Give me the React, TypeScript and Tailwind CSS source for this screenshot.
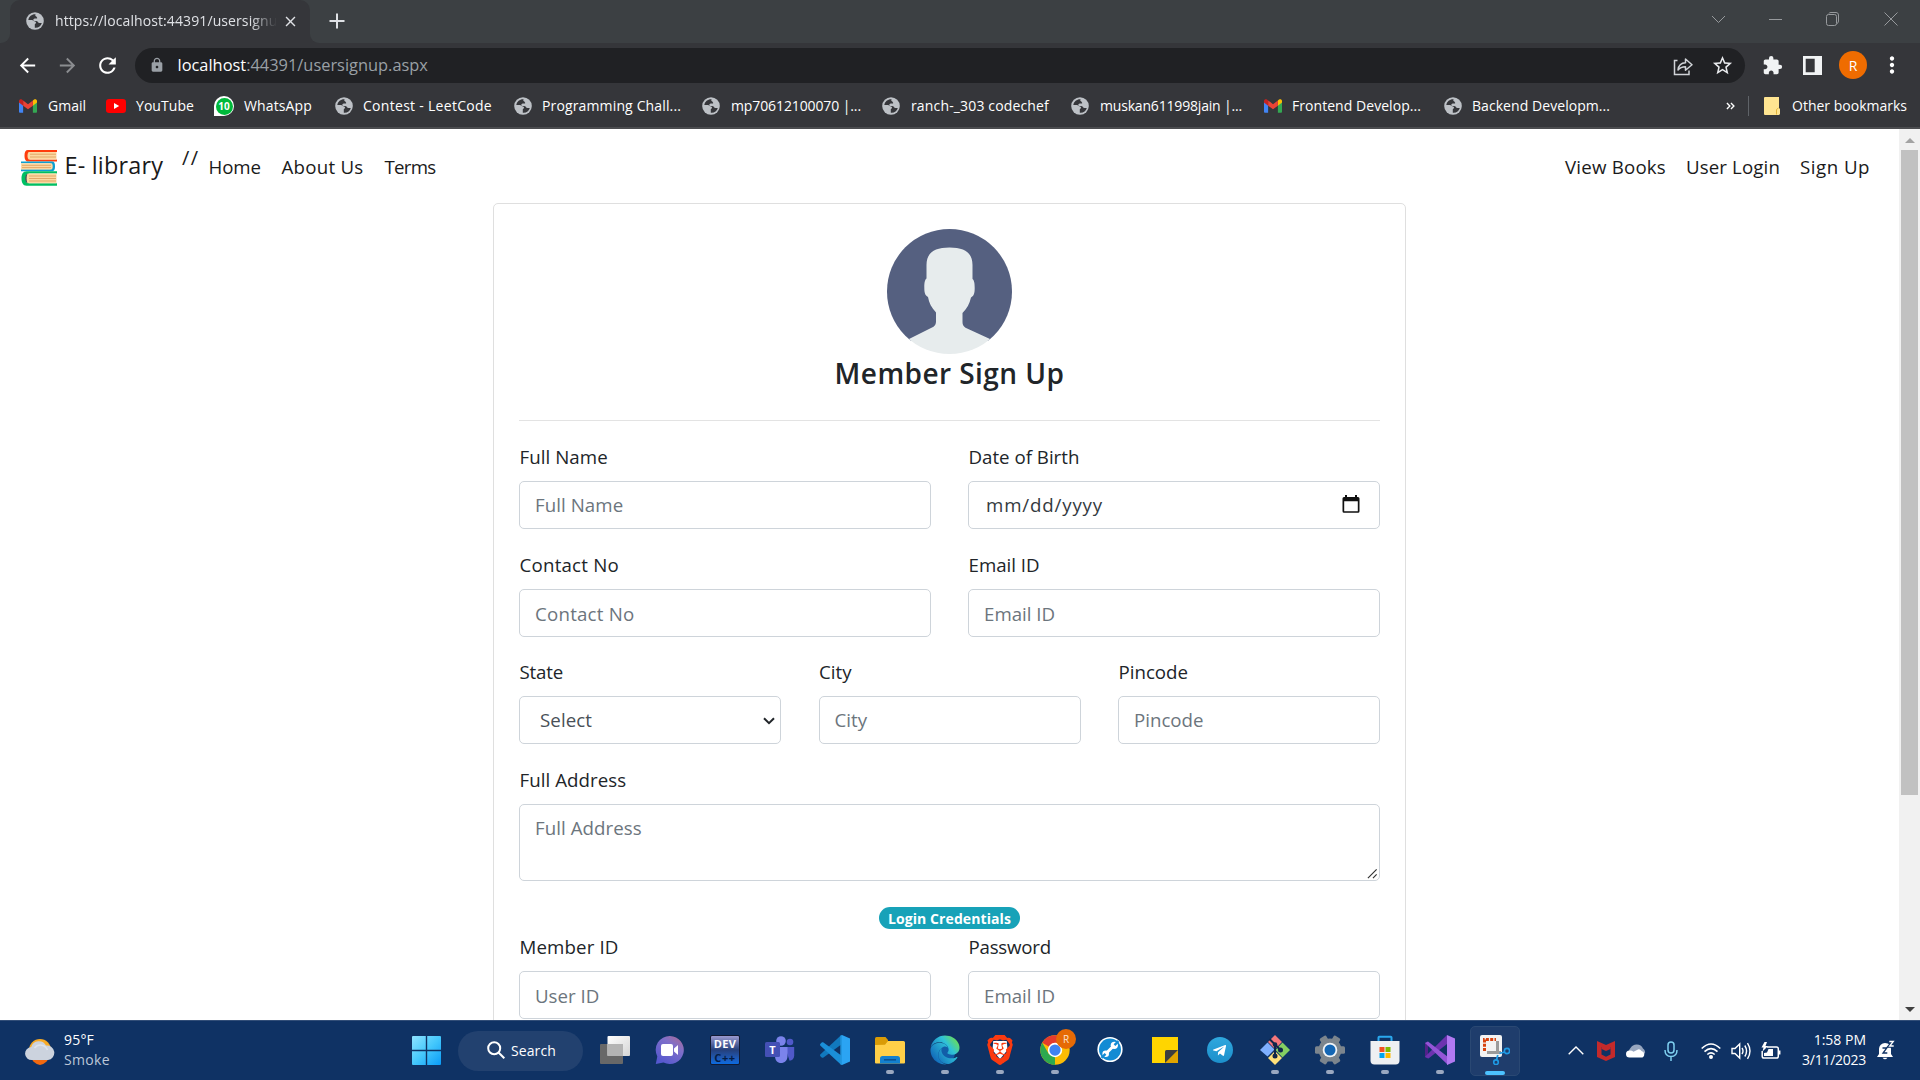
import React from "react";
import { MdExtension, MdLock, MdMoreVert, MdStarBorder, MdRefresh, MdArrowBack, MdArrowForward, MdClose } from "react-icons/md";
import { SiBrave } from "react-icons/si";
import { FaEdge, FaTelegramPlane } from "react-icons/fa";

/* ---------- small icons ---------- */

function Globe({ className = "" }: { className?: string }) {
  return (
    <svg viewBox="0 0 18 18" className={`h-[18px] w-[18px] shrink-0 ${className}`}>
      <circle cx="9" cy="9" r="8.8" fill="#bdc1c6" />
      <path
        d="M9.600 2.200C6 1.900 3 4.200 2.300 7.900l3.600.2c1.300.1 1.600 1 2.500 1.200.9.200 1.600.5 1.600 1.400 0 .9-1.200 1-1.200 1.900v3.100c3.400.4 6.100-1.500 7-4.700-1 .1-1.700.2-2.500 0-1.100-.3-1.300-1.500-2.400-1.800-1.300-.3-2.500.2-3.300-.6-.8-.9.1-2 1.200-2.100.9-.1 1.400.3 2.100-.1.700-.4.1-1-.2-1.500-.4-.7-1.200-.5-1.400-1.300-.1-.6.100-.900.300-1.400z"
        fill="#35363a"
      />
    </svg>
  );
}

function Gmail() {
  return (
    <svg viewBox="0 0 24 18" className="h-[14px] w-[18px] shrink-0">
      <path d="M0 3v13.500c0 .8.700 1.500 1.600 1.500H5.500V7z" fill="#4285f4" />
      <path d="M18.500 18h3.900c.9 0 1.600-.7 1.600-1.500V3l-5.500 4z" fill="#34a853" />
      <path d="M18.500 1.600V8.500L24 4.400V2.200c0-2-2.300-3-3.900-1.900z" fill="#fbbc04" />
      <path d="M5.500 8.500V1.600L12 6.500l6.500-4.900v6.900L12 13.400z" fill="#ea4335" />
      <path d="M0 2.200v2.200l5.500 4.100V1.600L3.900.3C2.300-.8 0 .2 0 2.200z" fill="#c5221f" />
    </svg>
  );
}

function YouTube() {
  return (
    <svg viewBox="0 0 20 14" className="h-[14px] w-[20px] shrink-0">
      <rect width="20" height="14" rx="3.200" fill="#f00" />
      <path d="M8 4v6l5.200-3z" fill="#fff" />
    </svg>
  );
}

function WhatsApp() {
  return (
    <span className="grid h-[20px] w-[20px] shrink-0 place-items-center rounded-full rounded-bl-[3px] bg-white">
      <span className="grid h-[17px] w-[17px] place-items-center rounded-full bg-[#00b93b] text-[10px] leading-none font-bold text-white">10</span>
    </span>
  );
}

function Books() {
  return (
    <svg viewBox="0 0 38 38" className="mt-[2px] h-[38px] w-[38px] shrink-0">
      <path d="M37 1H8C5.500 1 4.500 3 4.500 6.500S5.500 12.500 8 12.500h29v-2H9.500V3H37z" fill="#ff3d0d" />
      <path d="M9 3h27.500v7.500H9C7 10.500 7 3 9 3z" fill="#fcd9a2" />
      <path d="M10 5.200h26M10 8h26" stroke="#e3a767" strokeWidth="1" />
      <path d="M1 12.500h31c2.500 0 3 2 3 4.700s-.5 5-3 5H1v-2h29.500v-6H1z" fill="#0d9fd0" />
      <path d="M1 14.300h30.500c1.600 0 1.600 6.100 0 6.100H1z" fill="#fcd9a2" />
      <path d="M2 16.300h29M2 18.600h29" stroke="#e3a767" strokeWidth="1" />
      <path d="M37 22.300H6.500C3 22.300 1.500 25.500 1.500 29.500s1.500 7.200 5 7.200H37v-2.400H9V24.500h28z" fill="#00bf63" />
      <path d="M8 24.500h28.500v9.800H8c-3 0-3-9.800 0-9.800z" fill="#fcd9a2" />
      <path d="M7.500 24.500c-3 1.500-3 8.500 0 9.800-1.200-3-1.200-7 0-9.800z" fill="#3b4a55" />
      <path d="M9 27h27M9 29.500h27M9 32h27" stroke="#e3a767" strokeWidth="1" />
    </svg>
  );
}

/* ---------- browser chrome ---------- */

function TabStrip() {
  return (
    <div className="flex h-[43px] items-stretch bg-[#3c4043]">
      <div className="flex w-[10px] items-end bg-[#35363a]">
        <span className="h-full w-full rounded-br-[9px] bg-[#3c4043]" />
      </div>
      <div className="flex w-[300px] items-center rounded-t-[10px] bg-[#35363a] pb-[1px] pl-[16px]">
        <Globe />
        <span className="ml-[11px] w-[222px] pb-[1px] text-[14px] tracking-[0.1px] whitespace-nowrap text-[#dfe1e5] [mask-image:linear-gradient(to_right,#000_88%,transparent)]">
          https://localhost:44391/usersignu
        </span>
        <MdClose className="ml-[5px] h-[17px] w-[17px] text-[#dfe1e5]" />
      </div>
      <div className="flex flex-1 bg-[#35363a]">
        <div className="flex flex-1 items-center rounded-bl-[9px] bg-[#3c4043] pl-[19px]">
          <svg viewBox="0 0 16 16" className="mb-[1px] h-[16px] w-[16px]" stroke="#dfe1e5" strokeWidth="2">
            <path d="M8 .5v15M.5 8h15" />
          </svg>
          <svg viewBox="0 0 186 16" className="mr-[22px] mb-[6px] ml-auto h-[16px] w-[186px]" fill="none" stroke="#979a9d" strokeWidth="1">
            <path d="M0 5l6.500 6.500L13 5" />
            <path d="M57 8.500h13" />
            <path d="M114.500 5.500q0-2 2-2h6q2 0 2 2v7q0 2-2 2h-6q-2 0-2-2zM117 2.500q0-1 2-1h5q2.500 0 2.500 2.500v6q0 2-1.500 2.500" />
            <path d="M172.500 1.500l13 13M185.500 1.500l-13 13" />
          </svg>
        </div>
      </div>
    </div>
  );
}

function Toolbar() {
  return (
    <div className="flex h-[44px] items-center bg-[#35363a] pl-[16px]">
      <MdArrowBack className="h-[23px] w-[23px] text-white" />
      <MdArrowForward className="ml-[17px] h-[23px] w-[23px] text-[#8b8d90]" />
      <MdRefresh className="ml-[16px] h-[25px] w-[25px] text-white" />
      <div className="ml-[15px] flex h-[35px] w-[1610px] items-center rounded-full bg-[#202124] pl-[14px]">
        <MdLock className="h-[16px] w-[16px] text-[#9aa0a6]" />
        <span className="ml-[12.500px] pt-[1px] text-[16.4px] text-[#9aa0a6]">
          <span className="text-white">localhost</span>:44391/usersignup.aspx
        </span>
        <svg viewBox="0 0 20 20" className="mt-[1px] ml-auto h-[20px] w-[20px]" fill="none" stroke="#d0d3d7" strokeWidth="1.500">
          <path d="M4.500 4.500H1.500v14h14.500v-4" />
          <path d="M5 14c.5-4.500 3-7 7.500-7.200V3L19 8.800l-6.500 5.500v-3.500c-3.500 0-5.700.8-7.500 3.200z" strokeLinejoin="round" />
        </svg>
        <MdStarBorder className="mr-[11px] ml-[18px] h-[23px] w-[23px] text-[#e8eaed]" />
      </div>
      <MdExtension className="ml-[17px] h-[21px] w-[21px] text-[#f1f3f4]" />
      <svg viewBox="0 0 19 19" className="ml-[20px] h-[19px] w-[19px]">
        <path d="M0 0h19v19H0zM2.700 2.700v13.600h9V2.700z" fill="#f1f3f4" fillRule="evenodd" />
      </svg>
      <span className="ml-[17px] grid h-[28px] w-[28px] place-items-center rounded-full bg-[#ef6c00] text-[14px] text-white">R</span>
      <MdMoreVert className="ml-[12px] h-[26px] w-[26px] text-white" />
    </div>
  );
}

const bookmarks = [
  { icon: <Gmail />, text: "Gmail", gap: "gap-[11px]", w: "w-[87px]", ls: "" },
  { icon: <YouTube />, text: "YouTube", gap: "gap-[10px]", w: "w-[108px]", ls: "tracking-[0.06px]" },
  { icon: <WhatsApp />, text: "WhatsApp", gap: "gap-[10px]", w: "w-[121px]", ls: "tracking-[0.13px]" },
  { icon: <Globe />, text: "Contest - LeetCode", gap: "gap-[10px]", w: "w-[179px]", ls: "tracking-[0.29px]" },
  { icon: <Globe />, text: "Programming Chall...", gap: "gap-[10px]", w: "w-[188px]", ls: "tracking-[0.14px]" },
  { icon: <Globe />, text: "mp70612100070 |...", gap: "gap-[11px]", w: "w-[180px]", ls: "tracking-[-0.11px]" },
  { icon: <Globe />, text: "ranch-_303 codechef", gap: "gap-[11px]", w: "w-[189px]", ls: "tracking-[0.15px]" },
  { icon: <Globe />, text: "muskan611998jain |...", gap: "gap-[11px]", w: "w-[193px]", ls: "tracking-[-0.18px]" },
  { icon: <Gmail />, text: "Frontend Develop...", gap: "gap-[10px]", w: "w-[180px]", ls: "tracking-[0.05px]" },
  { icon: <Globe />, text: "Backend Developm...", gap: "gap-[10px]", w: "w-[180px]", ls: "tracking-[0.06px]" },
];

function Bookmarks() {
  return (
    <div className="flex h-[42px] items-center border-b-2 border-[#4b4c4f] bg-[#35363a] pr-[13px] pb-[2px] pl-[19px] text-[14px] text-white">
      {bookmarks.map((b) => (
        <div key={b.text} className={`flex shrink-0 items-center whitespace-nowrap ${b.gap} ${b.w} ${b.ls}`}>
          {b.icon}
          <span className="pb-[2px]">{b.text}</span>
        </div>
      ))}
      <svg viewBox="0 0 10 8" className="ml-auto h-[8px] w-[9px]" fill="none" stroke="#fff" strokeWidth="1.500">
        <path d="M1 .7L4.300 4 1 7.300M5.500.7L8.800 4 5.500 7.300" />
      </svg>
      <span className="ml-[13px] h-[20px] w-px bg-[#5f6368]" />
      <svg viewBox="0 0 16 18" className="ml-[15px] h-[18px] w-[16px]">
        <path d="M1 0h14v11l1 1v5l-1 1H1q-1 0-1-1V1q0-1 1-1z" fill="#ffe591" />
        <path d="M12.500 17.500v-5l2-1.500" stroke="#e3b53a" fill="none" />
      </svg>
      <span className="ml-[12px] pb-[2px] whitespace-nowrap">Other bookmarks</span>
    </div>
  );
}

/* ---------- page ---------- */

function Navbar() {
  return (
    <nav className="flex h-[74px] items-center pt-[2px] pr-[29px] pl-[20px] text-[18.7px] text-[#1a1a1a]">
      <Books />
      <span className="ml-[6.500px] w-[117.500px] pb-[2px] text-[23.4px] tracking-[0.2px]">E- library</span>
      <span className="w-[26px] pb-[18px] text-[20px] tracking-[1.400px]">//</span>
      <span className="ml-[0.500px] w-[73px] tracking-[-0.1px]">Home</span>
      <span className="w-[103px] tracking-[0.25px]">About Us</span>
      <span className="tracking-[-0.75px]">Terms</span>
      <span className="ml-auto tracking-[0.2px]">View Books</span>
      <span className="ml-[20px] tracking-[0.12px]">User Login</span>
      <span className="ml-[20px] tracking-[0.5px]">Sign Up</span>
    </nav>
  );
}

function Avatar() {
  return (
    <svg viewBox="0 0 125 125" className="mx-auto block h-[125px] w-[125px]">
      <defs>
        <clipPath id="disc">
          <circle cx="62.500" cy="62.500" r="62.500" />
        </clipPath>
      </defs>
      <g clipPath="url(#disc)">
        <path d="M0 0h125v112H0z" fill="#556080" />
        <path
          d="M39.500 36C39.500 24 47 18.500 62.500 18.500S85.500 24 85.500 36v14c1.700 1.500 2.200 4 2.200 9s-.7 8-3.700 9.500c-1.500 6.500-4 11-8.500 15.500v9c0 2.500.8 4.300 3 5.700L103 110v15H22v-15l24.500-12.300c2-1.300 2.500-3.200 2.500-5.700v-8.500c-4.500-5-7-9.500-8-15.500-3-1.500-3.700-4.500-3.700-9.500s.5-7.500 2.200-9z"
          fill="#e7eced"
        />
      </g>
    </svg>
  );
}

type FieldProps = { label: string; ls?: string; children: React.ReactNode };
function Field({ label, ls = "", children }: FieldProps) {
  return (
    <div>
      <div className={`mb-[9px] ml-[0.500px] h-[31px] pt-[1px] leading-[30px] text-[#212529] ${ls}`}>{label}</div>
      {children}
    </div>
  );
}

function Box({ children, className = "" }: { children: React.ReactNode; className?: string }) {
  return (
    <div className={`flex h-[48px] items-center rounded-[5px] border border-[#ced4da] bg-white px-[15px] pt-[1px] text-[#6c757d] ${className}`}>
      {children}
    </div>
  );
}

function SignUpCard() {
  return (
    <section className="mx-auto w-[913px] rounded-[5px] border border-[#dfdfdf] p-[25px] text-[18.7px]">
      <Avatar />
      <h4 className="h-[36px] text-center text-[28px] leading-[38px] font-semibold tracking-[0.45px] text-[#212529]">Member Sign Up</h4>
      <div className="mt-[30px] h-px bg-[#e3e3e3]" />
      <div className="mt-[20px] grid h-[108px] grid-cols-2 gap-[37px]">
        <Field label="Full Name" ls="tracking-[0.06px]">
          <Box className="tracking-[0.06px]">Full Name</Box>
        </Field>
        <Field label="Date of Birth">
          <Box className="justify-between pr-[19px] pl-[17px] text-[#343a40]">
            <span className="tracking-[0.84px]">mm/dd/yyyy</span>
            <svg viewBox="0 0 18 18" className="mb-[3px] h-[18px] w-[18px]">
              <path d="M3 0h2v2h8V0h2v2h1q1.500 0 1.500 1.500v12.800q0 1.500-1.500 1.500H2Q.5 17.800.5 16.300V3.500Q.5 2 2 2h1zM2.200 6.300v9.900h13.600V6.300z" fill="#111" fillRule="evenodd" />
            </svg>
          </Box>
        </Field>
      </div>
      <div className="grid h-[107px] grid-cols-2 gap-[37px]">
        <Field label="Contact No" ls="tracking-[0.22px]">
          <Box className="h-[47px] pt-[2px] tracking-[0.22px]">Contact No</Box>
        </Field>
        <Field label="Email ID">
          <Box className="h-[47px] pt-[2px]">Email ID</Box>
        </Field>
      </div>
      <div className="grid h-[108px] grid-cols-3 gap-[37.500px]">
        <Field label="State" ls="tracking-[-0.2px]">
          <Box className="justify-between pr-[5px] pl-[20px] text-[#495057]">
            <span className="tracking-[0.07px]">Select</span>
            <svg viewBox="0 0 12 8" className="h-[8px] w-[12px]" fill="none" stroke="#212529" strokeWidth="2">
              <path d="M1 1.200l5 5 5-5" />
            </svg>
          </Box>
        </Field>
        <Field label="City">
          <Box>City</Box>
        </Field>
        <Field label="Pincode">
          <Box>Pincode</Box>
        </Field>
      </div>
      <Field label="Full Address" ls="tracking-[0.05px]">
        <div className="flex h-[77px] justify-between rounded-[5px] border border-[#ced4da] pt-[8px] pl-[15px] leading-[30px] tracking-[0.05px] text-[#6c757d]">
          Full Address
          <svg viewBox="0 0 12 12" className="mr-[1px] mb-[1px] h-[11px] w-[11px] self-end" stroke="#333" strokeWidth="1.300">
            <path d="M1 11L10.500 1.500M6.500 11l4-4" />
          </svg>
        </div>
      </Field>
      <div className="flex h-[50px] items-end justify-center pb-[2px]">
        <span className="h-[22px] w-[141px] rounded-full bg-[#17a2b8] pt-[1px] text-center text-[14px] leading-[22px] font-bold tracking-[0.09px] text-white">
          Login Credentials
        </span>
      </div>
      <div className="grid h-[107px] grid-cols-2 gap-[37px]">
        <Field label="Member ID" ls="tracking-[0.13px]">
          <Box className="h-[47px] pt-[2px]">User ID</Box>
        </Field>
        <Field label="Password" ls="tracking-[-0.22px]">
          <Box className="h-[47px] pt-[2px]">Email ID</Box>
        </Field>
      </div>
    </section>
  );
}

function Scrollbar() {
  return (
    <div className="flex w-[21px] shrink-0 flex-col items-center bg-[#f1f1f1]">
      <svg viewBox="0 0 10 5" className="mt-[9px] h-[5px] w-[10px]">
        <path d="M5 0l5 5H0z" fill="#a3a3a3" />
      </svg>
      <div className="mt-[7px] h-[645px] w-[17px] bg-[#c1c1c1]" />
      <svg viewBox="0 0 10 5" className="mt-auto mb-[8px] h-[5px] w-[10px]">
        <path d="M0 0h10L5 5z" fill="#404040" />
      </svg>
    </div>
  );
}

/* ---------- taskbar ---------- */

const svg = "h-[30px] w-[30px]";

function TaskView() {
  return (
    <svg viewBox="0 0 30 30" className={svg}>
      <defs>
        <linearGradient id="tv" x2="1" y2="1"><stop stopColor="#fff" /><stop offset="1" stopColor="#d5d5d5" /></linearGradient>
      </defs>
      <rect x="0" y="9" width="23" height="20" rx="1" fill="#686868" />
      <rect x="7.500" y="1" width="22.500" height="20" rx="1" fill="url(#tv)" />
      <path d="M7.500 9H23v12H7.500z" fill="#b4b4b4" />
    </svg>
  );
}
function Chat() {
  return (
    <svg viewBox="0 0 30 30" className={svg}>
      <defs>
        <linearGradient id="ch" x1="1" y1="0" x2=".3" y2="1"><stop stopColor="#b06a8e" /><stop offset=".4" stopColor="#7f6fc9" /><stop offset="1" stopColor="#5558cf" /></linearGradient>
      </defs>
      <path d="M15 1a14 14 0 1 1-6.500 26.500L.8 29l1.500-7.500A14 14 0 0 1 15 1z" fill="url(#ch)" />
      <rect x="6" y="9" width="12" height="12" rx="2" fill="#fff" />
      <path d="M19 13.500l4-3.500v10l-4-3.500z" fill="#fff" />
    </svg>
  );
}
function DevCpp() {
  return (
    <span className="flex h-[30px] w-[30px] flex-col items-center overflow-hidden rounded-[2px] border border-[#111a33] bg-linear-to-b from-[#9a9ad0] via-[#24407c] to-[#0a6be0] text-[11px] leading-[15px] font-bold">
      <span className="tracking-[0.4px] text-white">DEV</span>
      <span className="-mt-[1px] tracking-[0.6px] text-[#041c44]">C++</span>
    </span>
  );
}
function Teams() {
  return (
    <svg viewBox="0 0 30 30" className={svg}>
      <circle cx="25" cy="7" r="3.300" fill="#5059c9" />
      <path d="M20 12h9.200v8.500c0 3-2 5-4.600 5.200z" fill="#5059c9" />
      <circle cx="16" cy="6" r="4.800" fill="#7b83eb" />
      <path d="M10 12h12.500v9c0 4.500-3 7-6.500 7s-6-2.500-6-7z" fill="#7b83eb" />
      <rect x="0" y="7" width="15" height="15" rx="1.500" fill="#4450b5" />
      <text x="7.500" y="18.500" textAnchor="middle" fontSize="11" fontWeight="700" fill="#fff">T</text>
    </svg>
  );
}
function VsCode() {
  return (
    <svg viewBox="0 0 30 30" className={svg}>
      <path d="M22 0l8 3.500v23L22 30z" fill="#2ba4f3" />
      <path d="M22 0v9L3.500 22.500c-.7.5-1.300.4-1.800 0L.5 21.300c-.7-.7-.6-1.500 0-2.100L20.500.7z" fill="#1179be" />
      <path d="M22 30v-9L3.500 7.500c-.7-.5-1.300-.4-1.800 0L.5 8.700c-.7.7-.6 1.500 0 2.100l20 18.500z" fill="#1b8fd8" />
      <path d="M22 0v30l-1.700-.8V.8z" fill="#2196e0" />
    </svg>
  );
}
function Explorer() {
  return (
    <svg viewBox="0 0 30 30" className={svg}>
      <path d="M0 3.500Q0 2 1.500 2h9L13 5v6H0z" fill="#d99b06" />
      <path d="M0 10l10-.3L13 6h15.500Q30 6 30 7.500v20q0 1-1 1H1q-1 0-1-1z" fill="#ffcf48" />
      <path d="M5 28.500v-5q0-2.500 2.500-2.500h15q2.500 0 2.500 2.500v5z" fill="#1380cf" />
      <path d="M9 24.800h12" stroke="#0b5193" strokeWidth="1.600" />
    </svg>
  );
}
function Edge() {
  return (
    <>
      <svg className="h-0 w-0">
        <defs>
          <linearGradient id="ed" x1="1" y1=".2" x2=".1" y2=".9">
            <stop stopColor="#6ee04f" /><stop offset=".35" stopColor="#2fc2d8" /><stop offset="1" stopColor="#0f62b8" />
          </linearGradient>
        </defs>
      </svg>
      <span className="grid place-items-center">
        <span className="col-start-1 row-start-1 mt-[6px] h-[20px] w-[20px] rounded-full bg-[#125ea8]" />
        <FaEdge className="relative col-start-1 row-start-1 h-[30px] w-[30px]" fill="url(#ed)" />
      </span>
    </>
  );
}
function Brave() {
  return (
    <span className="grid place-items-center">
      <svg viewBox="0 0 24 28" className="col-start-1 row-start-1 h-[22px] w-[18px]">
        <path d="M3 2h18l1 12-10 12L2 14z" fill="#fff" />
      </svg>
      <SiBrave className="relative col-start-1 row-start-1 h-[30px] w-[30px] text-[#fb3a10]" />
    </span>
  );
}
function Chrome() {
  return (
    <span className="relative">
      <svg viewBox="0 0 48 48" className={svg}>
        <circle cx="24" cy="24" r="23.500" fill="#fbbc05" />
        <path d="M3.600 12.200a23.500 23.500 0 0 1 40.800 0H24v12z" fill="#e33b2e" />
        <path d="M3.600 12.200L13.800 30 24 35.500l-.3 12A23.500 23.500 0 0 1 3.600 12.200z" fill="#2da94f" />
        <path d="M13.800 30L24 35.500l10.200-5.500-10.500 17.500z" fill="#fbbc05" />
        <path d="M13.800 30l10.200 5 0 12.500a23 23 0 0 1-4-.3z" fill="#2da94f" />
        <circle cx="24" cy="24" r="11.500" fill="#fff" />
        <circle cx="24" cy="24" r="9" fill="#3f82f1" />
      </svg>
      <span className="absolute top-[-6px] left-[16px] grid h-[20px] w-[20px] place-items-center rounded-full bg-[#e66a05] text-[10px] text-[#fbe3cf]">R</span>
    </span>
  );
}
function Wrench() {
  return (
    <svg viewBox="0 0 30 30" className={svg}>
      <circle cx="15" cy="14.500" r="12.600" fill="#fff" />
      <circle cx="15" cy="14.500" r="11" fill="#128bd4" />
      <path d="M10.500 19l9-9" stroke="#fff" strokeWidth="3" />
      <circle cx="19.300" cy="10.300" r="3.600" fill="#fff" />
      <circle cx="10.700" cy="18.700" r="3.300" fill="#fff" />
      <path d="M19.500 10.200l4-4M10.500 18.800l-4 4" stroke="#128bd4" strokeWidth="2.400" />
    </svg>
  );
}
function Sticky() {
  return (
    <svg viewBox="0 0 30 30" className={svg}>
      <path d="M2 2h26v26H2z" fill="#ffd500" />
      <path d="M15 28l13-13v13z" fill="#e0a400" />
      <path d="M15 28V16.500q0-1.500 1.500-1.500H28z" fill="#3d3d3d" />
    </svg>
  );
}
function Telegram() {
  return (
    <span className="grid h-[26px] w-[26px] place-items-center rounded-full bg-linear-to-b from-[#2fa8de] to-[#1c8fcb]">
      <FaTelegramPlane className="mr-[2px] h-[15px] w-[15px] text-white" />
    </span>
  );
}
function Git() {
  return (
    <svg viewBox="0 0 30 30" className={svg}>
      <path d="M15 0l7 7-7 7-7-7z" fill="#f5777b" />
      <path d="M7.500 7.500l7 7-7 7L0 15z" fill="#7fb0ff" />
      <path d="M22.500 7.500L30 15l-7.500 7.500-7-7.500z" fill="#85cf62" />
      <path d="M15 16l7 7-7 7-7-7z" fill="#ffe07a" />
      <path d="M15 22V9M9.500 4L15 9.500l5.500 5.500" stroke="#10264a" strokeWidth="2" fill="none" />
      <circle cx="15" cy="9.500" r="2.300" fill="#10264a" />
      <circle cx="20.500" cy="15" r="2.500" fill="#10264a" />
      <circle cx="15" cy="21" r="2.500" fill="#10264a" />
    </svg>
  );
}
function Gear() {
  return (
    <svg viewBox="0 0 30 30" className={svg}>
      <g fill="#7c858d">
        <circle cx="15" cy="15" r="11.500" />
        {[0, 60, 120].map((a) => (
          <rect key={a} x="0" y="11.200" width="30" height="7.600" rx="1.500" transform={`rotate(${a} 15 15)`} />
        ))}
      </g>
      <circle cx="15" cy="15" r="7.300" fill="#f1f4f7" />
      <circle cx="15" cy="15" r="5.500" fill="#1466b4" />
    </svg>
  );
}
function Store() {
  return (
    <svg viewBox="0 0 30 30" className={svg}>
      <path d="M8.500 7V2.500q0-.8.800-.8h11.400q.8 0 .8.800V7" fill="none" stroke="#2aa8ee" strokeWidth="2" />
      <path d="M.5 6h29v19.500q0 4-4 4h-21q-4 0-4-4z" fill="#eef0f2" />
      <path d="M9.500 12h5v5h-5z" fill="#f25022" />
      <path d="M15.500 12h5v5h-5z" fill="#7fba00" />
      <path d="M9.500 18h5v5h-5z" fill="#00a4ef" />
      <path d="M15.500 18h5v5h-5z" fill="#ffb900" />
    </svg>
  );
}
function VisualStudio() {
  return (
    <svg viewBox="0 0 30 30" className={svg}>
      <path d="M0 8l3-1.500v17L0 22z" fill="#52218a" />
      <path d="M22 0v9L3.500 23.500 0 22l.5-.8z" fill="#6c33af" />
      <path d="M0 8l3-1.500L23 22v8z" fill="#9455d6" />
      <path d="M22 0l8 3.500v23L22 30z" fill="#b179f1" />
    </svg>
  );
}
function Snip() {
  return (
    <svg viewBox="0 0 30 30" className={svg}>
      <rect x="0" y="0" width="22" height="22" rx="2" fill="#f3f3f3" />
      <path d="M4.500 16V4.500H16" stroke="#d8430f" strokeWidth="3" strokeDasharray="3 1.300" fill="none" />
      <path d="M17.500 6v13M7 17.500h14" stroke="#9b9b9b" strokeWidth="3" />
      <circle cx="27" cy="16" r="2.600" fill="none" stroke="#1f9be6" strokeWidth="1.600" />
      <circle cx="16" cy="27.200" r="2.300" fill="none" stroke="#1f9be6" strokeWidth="1.600" />
      <path d="M24.500 17l-5 1.500M16.500 25l1.300-5" stroke="#1f9be6" strokeWidth="1.800" />
    </svg>
  );
}

const apps: { el: React.ReactNode; open?: boolean }[] = [
  { el: <TaskView /> },
  { el: <Chat /> },
  { el: <DevCpp /> },
  { el: <Teams /> },
  { el: <VsCode /> },
  { el: <Explorer />, open: true },
  { el: <Edge />, open: true },
  { el: <Brave />, open: true },
  { el: <Chrome />, open: true },
  { el: <Wrench /> },
  { el: <Sticky /> },
  { el: <Telegram /> },
  { el: <Git />, open: true },
  { el: <Gear />, open: true },
  { el: <Store />, open: true },
  { el: <VisualStudio />, open: true },
];

function Weather() {
  return (
    <svg viewBox="0 0 30 30" className="mb-[2px] h-[30px] w-[30px]">
      <circle cx="15" cy="15" r="11" fill="#f8ab26" />
      <path d="M5.500 20.500h19A11 11 0 0 1 15 30a11 11 0 0 1-9.500-9.500z" fill="#f2690f" />
      <path d="M7 25a6.500 6.500 0 0 1-.8-13A8 8 0 0 1 21 10.500 7.200 7.200 0 0 1 23 25z" fill="#ccd3de" />
      <path d="M9.500 13a7.500 7.500 0 0 1 13 2" fill="none" stroke="#dfe4ec" strokeWidth="1.500" />
    </svg>
  );
}

function Tray() {
  return (
    <div className="ml-auto flex items-center">
      <svg viewBox="0 0 16 9" className="h-[9px] w-[16px]" fill="none" stroke="#fff" strokeWidth="1.400">
        <path d="M.7 8.300L8 1l7.300 7.300" />
      </svg>
      <svg viewBox="0 0 18 20" className="ml-[13px] h-[20px] w-[18px]">
        <path d="M0 0l9 4 9-4v16l-9 4-9-4z" fill="#c32a2b" />
        <path d="M4.500 6v7.500L9 15.700l4.500-2.200V6L9 8.300z" fill="#0f3264" />
        <path d="M4.500 4.500L9 6.500l4.500-2V8L9 10 4.500 8z" fill="#c32a2b" />
      </svg>
      <svg viewBox="0 0 20 14" className="ml-[11px] h-[14px] w-[20px]">
        <path d="M4 10a4.500 4.500 0 0 1 .5-6A7 7 0 0 1 17 4.500a5 5 0 0 1 2 5z" fill="#97a6bf" />
        <path d="M3.500 13.500a3.500 3.500 0 0 1 0-7q2-.5 4 1.200L12 5.500q2-.8 3.500 1.500a3.500 3.500 0 0 1 1 6.500z" fill="#fff" />
      </svg>
      <svg viewBox="0 0 14 20" className="ml-[18px] h-[20px] w-[14px]" fill="none" stroke="#7fd0f0" strokeWidth="1.500">
        <rect x="4" y="1" width="6" height="11" rx="3" />
        <path d="M1 9q0 6.500 6 6.500T13 9M7 15.500V20" />
      </svg>
      <svg viewBox="0 0 20 16" className="ml-[23px] h-[16px] w-[20px]" fill="none" stroke="#fff" strokeWidth="1.600">
        <path d="M.7 5.500q9.300-9 18.600 0M3.500 8.700q6.500-6 13 0M6.300 11.500q3.700-3.300 7.400 0" />
        <circle cx="10" cy="14" r="1.200" fill="#fff" />
      </svg>
      <svg viewBox="0 0 20 18" className="ml-[10px] h-[18px] w-[20px]" fill="none" stroke="#fff" strokeWidth="1.400">
        <path d="M1 6.500h3L8.700 2v14L4 11.500H1z" />
        <path d="M11 6q2 3 0 6M13.800 3.500q3.500 5.500 0 11M16.500 1.200q5 7.800 0 15.600" />
      </svg>
      <svg viewBox="0 0 20 18" className="ml-[10px] h-[18px] w-[20px]">
        <path d="M6 5h9.500q1.800 0 1.800 1.800v7.400q0 1.800-1.800 1.800H3q-1.800 0-1.800-1.800V9M18.700 8.500v4" fill="none" stroke="#fff" strokeWidth="1.500" />
        <path d="M7.500 7H12v7H3V11l3-.5z" fill="#fff" />
        <path d="M3.500 0L.5 5.500h2L1.500 9.500 7 4H4.500L6 0z" fill="#fff" />
      </svg>
      <div className="w-[85px] pb-[2px] text-right text-[14px] leading-[20px] text-white">
        <div>1:58 PM</div>
        <div className="tracking-[-0.26px]">3/11/2023</div>
      </div>
      <svg viewBox="0 0 18 20" className="mb-[1px] ml-[11px] h-[20px] w-[18px]">
        <path d="M2 14V9a6 6 0 0 1 6-6q6 0 6 6v5l2 3H0z" fill="#fff" />
        <path d="M5.500 17.800h5q-2.500 3-5 0z" fill="#fff" />
        <path d="M12.300 1.500h4L12.700 6h4" fill="none" stroke="#0f3264" strokeWidth="3.600" />
        <path d="M12.300 1.500h4L12.700 6h4" fill="none" stroke="#fff" strokeWidth="1.300" />
        <path d="M5.500 8h4.300L6 13h4.300" fill="none" stroke="#0f3264" strokeWidth="1.300" />
      </svg>
    </div>
  );
}

function Taskbar() {
  return (
    <footer className="flex h-[60px] shrink-0 items-center border-t border-[#324e78] bg-[#0f3264] pr-[25px] pl-[25px]">
      <Weather />
      <div className="ml-[9px] w-[348px] pb-[2px] text-[14px] leading-[20px]">
        <div className="tracking-[0.19px] text-white">95°F</div>
        <div className="tracking-[0.34px] text-[#bcc7d8]">Smoke</div>
      </div>
      <svg viewBox="0 0 29 29" className="h-[29px] w-[29px]">
        <defs>
          <linearGradient id="wn" x2="1" y2="1"><stop stopColor="#8fe3ff" /><stop offset=".5" stopColor="#45c8fc" /><stop offset="1" stopColor="#0a9bf7" /></linearGradient>
        </defs>
        <path d="M0 1q0-1 1-1h12.800v13.800H0zM15.200 0H28q1 0 1 1v12.800H15.200zM0 15.200h13.800V29H1q-1 0-1-1zM15.200 15.200H29V28q0 1-1 1H15.200z" fill="url(#wn)" />
      </svg>
      <div className="ml-[17px] flex h-[40px] w-[125px] items-center rounded-full bg-[#22416f] pb-[1px] pl-[29px] text-[14px] text-white">
        <svg viewBox="0 0 18 18" className="h-[18px] w-[18px]" fill="none" stroke="#fff" strokeWidth="2">
          <circle cx="7.200" cy="7.200" r="6" />
          <path d="M11.500 11.500l5.800 5.800" />
        </svg>
        <span className="ml-[6px] tracking-[0.1px]">Search</span>
      </div>
      <div className="ml-[4.500px] flex h-full items-center">
        {apps.map((a, i) => (
          <div key={i} className="flex h-full w-[55px] flex-col items-center pt-[14px]">
            <div className="flex h-[30px] items-center justify-center">{a.el}</div>
            {a.open && <span className="mt-[5px] h-[4px] w-[8px] rounded-full bg-[#9aa8c0]" />}
          </div>
        ))}
        <div className="ml-[2.500px] flex h-[50px] w-[50px] flex-col items-center rounded-[5px] border border-[#2a4873] bg-[#1f3d6c] pt-[8px]">
          <Snip />
          <span className="mt-[6px] h-[4px] w-[20px] shrink-0 rounded-full bg-[#4cc2ff]" />
        </div>
      </div>
      <Tray />
    </footer>
  );
}

export default function App() {
  return (
    <div className="flex h-[1080px] w-[1920px] flex-col overflow-hidden bg-white font-['Open_Sans',sans-serif]">
      <TabStrip />
      <Toolbar />
      <Bookmarks />
      <div className="flex min-h-0 flex-1 overflow-hidden">
        <main className="flex-1 overflow-hidden">
          <Navbar />
          <SignUpCard />
        </main>
        <Scrollbar />
      </div>
      <Taskbar />
    </div>
  );
}
